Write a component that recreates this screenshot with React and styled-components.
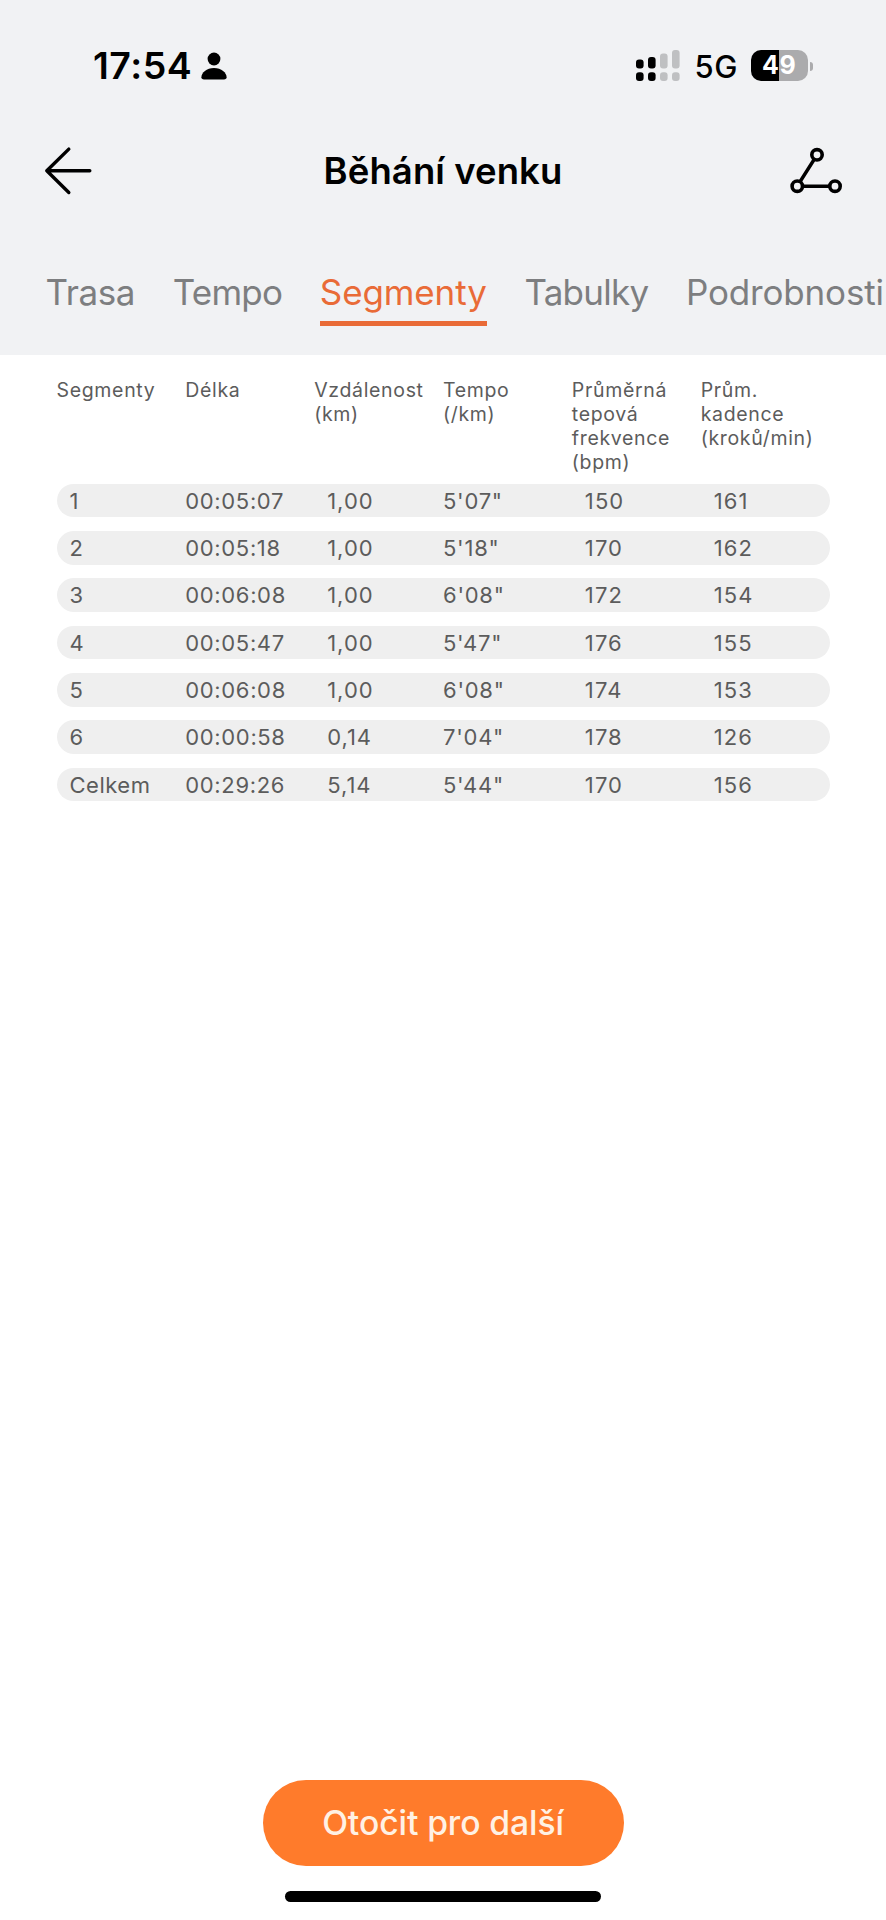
import React from 'react';
import styled, { createGlobalStyle } from 'styled-components';

const GlobalStyle = createGlobalStyle`
  * { box-sizing: border-box; }
  body {
    margin: 0;
    background: #fff;
    font-family: "Inter", "Liberation Sans", sans-serif;
  }
`;

const Screen = styled.main`
  width: 886px;
  height: 1920px;
  display: flex;
  flex-direction: column;
  overflow: hidden;
  background: #fff;
`;

const TopArea = styled.header`
  height: 355px;
  flex: none;
  background: #f1f2f4;
`;

const StatusBar = styled.div`
  height: 132px;
  padding: 0 73px 0 93px;
  display: flex;
  align-items: center;
  justify-content: space-between;
  color: #000;
`;

const StatusGroup = styled.div`
  display: flex;
  align-items: center;
`;

const Clock = styled.span`
  font-size: 37.5px;
  font-weight: 600;
  line-height: 46px;
  letter-spacing: 0.5px;
  margin-right: 8.5px;
`;

const Network = styled.span`
  width: 40px;
  margin: 2px 16.5px 0 14.5px;
  font-size: 31px;
  font-weight: 500;
  line-height: 38px;
  letter-spacing: 0.6px;
  white-space: nowrap;
`;

const Battery = styled.div`
  width: 56.5px;
  height: 31px;
  margin-top: -1px;
  border-radius: 10px;
  display: flex;
  align-items: center;
  justify-content: center;
  background: linear-gradient(90deg, #000 0 28.5px, #ababad 28.5px);
  color: #fff;
  font-size: 25px;
  font-weight: 700;
  line-height: 33px;
  letter-spacing: 0.7px;
`;

const BatteryNub = styled.span`
  width: 3.5px;
  height: 9px;
  margin-left: 2px;
  border-radius: 0 4px 4px 0;
  background: #ababad;
`;

const TitleBar = styled.div`
  height: 78px;
  padding: 0 40px;
  display: grid;
  grid-template-columns: 60px 1fr 60px;
  align-items: center;
`;

const Title = styled.h1`
  margin: 0;
  text-align: center;
  font-size: 36.5px;
  font-weight: 600;
  line-height: 46px;
  letter-spacing: 0.08px;
  color: #000;
`;

const IconButton = styled.button`
  height: 60px;
  padding: 0 ${(p) => (p.$end ? 4.3 : 0)}px 0 0;
  border: 0;
  background: none;
  display: flex;
  align-items: center;
  justify-content: ${(p) => (p.$end ? 'flex-end' : 'flex-start')};
`;

const Tabs = styled.nav`
  display: flex;
  gap: 37.7px;
  padding: 58px 0 0 45.5px;
`;

const Tab = styled.span`
  flex: none;
  height: 58px;
  font-size: 35px;
  line-height: 48px;
  letter-spacing: ${(p) => p.$tracking}px;
  color: ${(p) => (p.$active ? '#e96b37' : '#7d7e80')};
  border-bottom: 5px solid ${(p) => (p.$active ? '#e96b37' : 'transparent')};
  white-space: nowrap;
`;

const Table = styled.section`
  flex: 1;
  padding: 23px 56.5px 0;
`;

const columns = `
  display: grid;
  grid-template-columns: repeat(6, 1fr);
`;

const HeadRow = styled.div`
  ${columns}
  height: 105.7px;
`;

const HeadCell = styled.div`
  font-size: 19.5px;
  line-height: 24px;
  letter-spacing: 0.67px;
  color: #5c5c5c;
  white-space: pre-line;
`;

const Rows = styled.div`
  display: flex;
  flex-direction: column;
  gap: 13.83px;
`;

const Row = styled.div`
  ${columns}
  height: 33.5px;
  border-radius: 17px;
  background: #efefef;
`;

const Cell = styled.div`
  padding-left: ${(p) => (p.$inset ? 13 : 0)}px;
  font-size: 22px;
  line-height: 34.6px;
  letter-spacing: ${(p) => p.$tracking}px;
  color: #5c5c5c;
  white-space: nowrap;
`;

const Footer = styled.footer`
  height: 140px;
  flex: none;
  display: flex;
  flex-direction: column;
  align-items: center;
`;

const RotateButton = styled.button`
  width: 361px;
  height: 86px;
  padding: 0;
  border: 0;
  border-radius: 43px;
  background: #ff7b2b;
  color: #fff1e4;
  font-family: inherit;
  font-size: 33.7px;
  font-weight: 500;
  line-height: 86px;
  letter-spacing: -0.1px;
`;

const HomeIndicator = styled.div`
  width: 316px;
  height: 11.5px;
  margin-top: 24.5px;
  border-radius: 6px;
  background: #000;
`;

const PersonIcon = () => (
  <svg width="26" height="28" viewBox="0 0 26 28">
    <circle cx="13" cy="7" r="6.4" />
    <path d="M3 27.4C1.3 27.4.4 26.6.4 25.2C.4 20.8 5.6 16 13 16S25.6 20.8 25.6 25.2C25.6 26.6 24.7 27.4 23 27.4Z" />
  </svg>
);

const bars = [
  { x: 0, top: 9.5, on: true },
  { x: 12, top: 7, on: true },
  { x: 24, top: 3.5, on: false },
  { x: 36, top: 0, on: false },
];

const SignalIcon = () => (
  <svg width="44" height="32" viewBox="0 0 44 32">
    {bars.map((b) => (
      <g key={b.x} fill={b.on ? '#000' : '#bfc0c2'}>
        <rect x={b.x} y={b.top} width="7.6" height={18.6 - b.top} rx="3" />
        <rect x={b.x} y="22.3" width="7.6" height="8.6" rx="3" />
      </g>
    ))}
  </svg>
);

const BackIcon = () => (
  <svg width="56" height="50" viewBox="0 0 56 50" fill="none" stroke="#000" strokeWidth="3.4" strokeLinecap="round" strokeLinejoin="round">
    <path d="M6.8 24.8H49.8M28.8 3.1L6.8 24.8L28.8 46.5" />
  </svg>
);

const TrackIcon = () => (
  <svg width="54" height="48" viewBox="0 0 54 48" fill="none" stroke="#000" strokeWidth="3.6">
    <circle cx="29" cy="7.8" r="5.2" />
    <circle cx="9.3" cy="39.2" r="5.2" />
    <circle cx="47" cy="39.2" r="5.2" />
    <path d="M26.2 12.4L12.1 34.6M14.6 39.2H41.7" />
  </svg>
);

const tabs = [
  { label: 'Trasa', tracking: -0.4 },
  { label: 'Tempo', tracking: -0.8 },
  { label: 'Segmenty', tracking: -0.12, active: true },
  { label: 'Tabulky', tracking: -0.75 },
  { label: 'Podrobnosti', tracking: -0.17 },
];

const heads = [
  'Segmenty',
  'Délka',
  'Vzdálenost\n(km)',
  'Tempo\n(/km)',
  'Průměrná\ntepová\nfrekvence\n(bpm)',
  'Prům.\nkadence\n(kroků/min)',
];

const cellStyles = [
  { inset: true, tracking: 0.5 },
  { inset: false, tracking: 0.64 },
  { inset: true, tracking: 1 },
  { inset: false, tracking: 0.75 },
  { inset: true, tracking: 1.1 },
  { inset: true, tracking: 1.1 },
];

const segments = [
  ['1', '00:05:07', '1,00', '5\'07"', '150', '161'],
  ['2', '00:05:18', '1,00', '5\'18"', '170', '162'],
  ['3', '00:06:08', '1,00', '6\'08"', '172', '154'],
  ['4', '00:05:47', '1,00', '5\'47"', '176', '155'],
  ['5', '00:06:08', '1,00', '6\'08"', '174', '153'],
  ['6', '00:00:58', '0,14', '7\'04"', '178', '126'],
  ['Celkem', '00:29:26', '5,14', '5\'44"', '170', '156'],
];

export default function App() {
  return (
    <Screen>
      <GlobalStyle />
      <TopArea>
        <StatusBar>
          <StatusGroup>
            <Clock>17:54</Clock>
            <PersonIcon />
          </StatusGroup>
          <StatusGroup>
            <SignalIcon />
            <Network>5G</Network>
            <Battery>49</Battery>
            <BatteryNub />
          </StatusGroup>
        </StatusBar>
        <TitleBar>
          <IconButton aria-label="Zpět"><BackIcon /></IconButton>
          <Title>Běhání venku</Title>
          <IconButton $end aria-label="Trasa"><TrackIcon /></IconButton>
        </TitleBar>
        <Tabs>
          {tabs.map((t) => (
            <Tab key={t.label} $active={t.active} $tracking={t.tracking}>{t.label}</Tab>
          ))}
        </Tabs>
      </TopArea>
      <Table>
        <HeadRow>
          {heads.map((h) => <HeadCell key={h}>{h}</HeadCell>)}
        </HeadRow>
        <Rows>
          {segments.map((row) => (
            <Row key={row[0]}>
              {row.map((value, i) => (
                <Cell key={i} $inset={cellStyles[i].inset} $tracking={cellStyles[i].tracking}>{value}</Cell>
              ))}
            </Row>
          ))}
        </Rows>
      </Table>
      <Footer>
        <RotateButton>Otočit pro další</RotateButton>
        <HomeIndicator />
      </Footer>
    </Screen>
  );
}
